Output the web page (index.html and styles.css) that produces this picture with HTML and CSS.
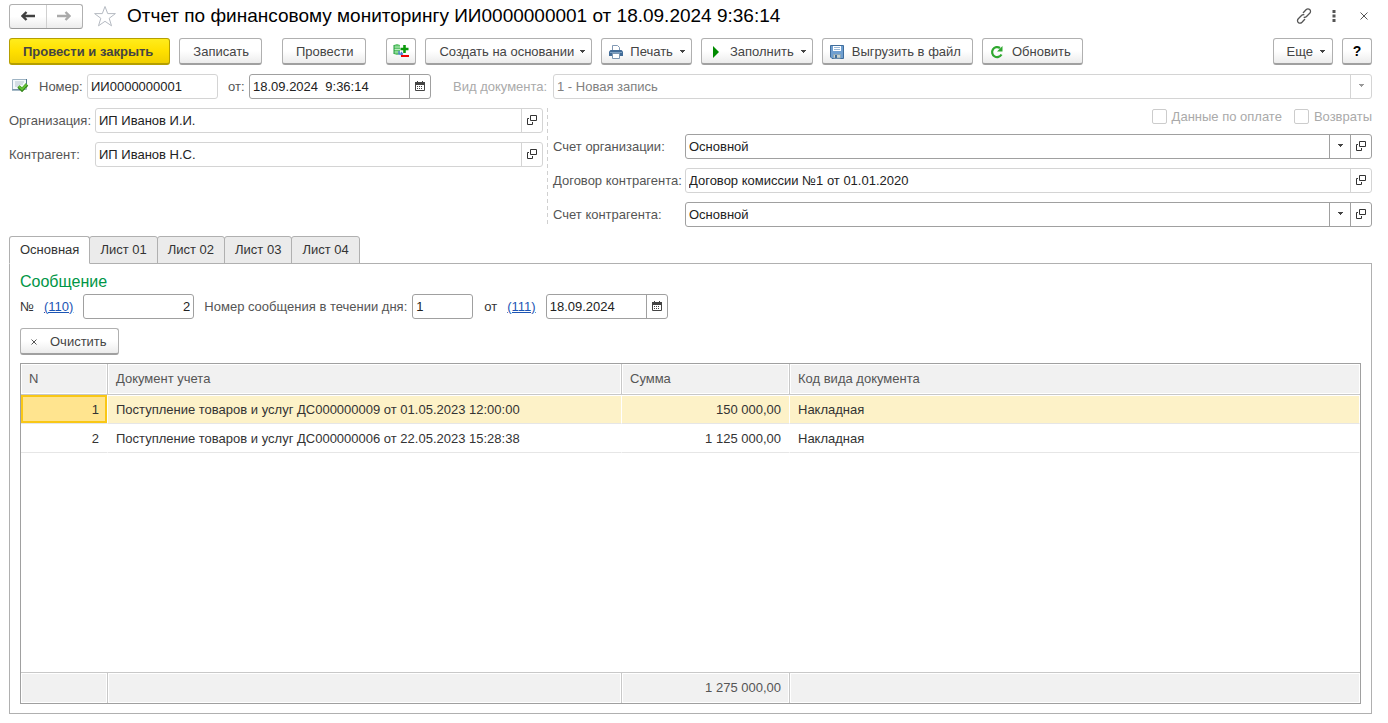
FILE: index.html
```html
<!DOCTYPE html>
<html lang="ru">
<head>
<meta charset="utf-8">
<title>Отчет по финансовому мониторингу</title>
<link rel="stylesheet" href="styles.css">
</head>
<body>
<svg class="sprite" aria-hidden="true">
  <symbol id="i-open" viewBox="0 0 10 10"><path d="M3.500.5h6v5h-6zM2 3.500H.5v6h5V7" fill="none" stroke="#333"/></symbol>
  <symbol id="i-cal" viewBox="0 0 10 10"><path d="M.5 1.500h9v8h-9z" fill="#fff" stroke="#444"/><path d="M0 1h10v3H0zM2 0h1v1H2zM7 0h1v1H7zM2 5h1v1H2zM4 5h1v1H4zM6 5h1v1H6zM2 7h1v1H2zM4 7h1v1H4zM6 7h1v1H6z" fill="#444"/></symbol>
  <symbol id="i-caret" viewBox="0 0 5 3"><path d="M0 0h5v1H4v1H3v1H2V2H1V1H0z" fill="currentColor"/></symbol>
  <symbol id="i-disk" viewBox="0 0 14 14"><path d="M.5.5h13v13H2L.5 12z" fill="#6f9fd0" stroke="#3f6d9c"/><path d="M3 1h8v5H3z" fill="#fff"/><path d="M4 2h6v1H4zM4 4h6v1H4z" fill="#9ab8d6"/><path d="M3.500 9.500h7V13h-7z" fill="#c9d3cf" stroke="#8fa8b8"/><path d="M5 10h2v3H5z" fill="#3f6d9c"/></symbol>
</svg>
<main class="form">
  <header class="titlebar">
    <div class="nav">
      <button type="button" aria-label="Назад"><svg width="14" height="10" viewBox="0 0 14 10"><path d="M14 5H2M5.500 1L1.500 5l4 4" fill="none" stroke="#404040" stroke-width="2.400"/></svg></button>
      <button type="button" aria-label="Вперед"><svg width="14" height="10" viewBox="0 0 14 10"><path d="M0 5h12M8.500 1l4 4-4 4" fill="none" stroke="#aaa" stroke-width="2.400"/></svg></button>
    </div>
    <button type="button" class="plain star" aria-label="В избранное"><svg width="24" height="22" viewBox="0 0 24 22"><path d="M12 1.500l2.700 7.100h7.700l-6.200 4.700 2.300 7.500L12 16.300l-6.500 4.500 2.300-7.500-6.200-4.700h7.700z" fill="#fff" stroke="#b5bac2"/></svg></button>
    <h1>Отчет по финансовому мониторингу ИИ0000000001 от 18.09.2024 9:36:14</h1>
    <div class="window-tools">
      <button type="button" class="plain" aria-label="Ссылка"><svg width="16" height="16" viewBox="0 0 16 16"><g fill="none" stroke="#555" stroke-width="1.300"><path d="M7 5l3-3.200c1.200-1.200 2.600-1.200 3.700-.2s1 2.600 0 3.700L10.500 8.500c-.8.900-1.900 1.100-2.800.7"/><path d="M9 11l-3 3.200c-1.200 1.200-2.600 1.200-3.700.2s-1-2.600 0-3.700L5.500 7.500c.8-.9 1.900-1.100 2.800-.7"/></g></svg></button>
      <button type="button" class="plain" aria-label="Меню"><svg width="4" height="12" viewBox="0 0 4 12"><path d="M.5 0h3v3h-3zM.5 4.500h3v3h-3zM.5 9h3v3h-3z" fill="#555"/></svg></button>
      <button type="button" class="plain close" aria-label="Закрыть"><svg width="8" height="8" viewBox="0 0 8 8"><path d="M.5.5l7 7M7.500.5l-7 7" stroke="#555"/></svg></button>
    </div>
  </header>

  <div class="toolbar">
    <button type="button" class="btn primary">Провести и закрыть</button>
    <button type="button" class="btn">Записать</button>
    <button type="button" class="btn group">Провести</button>
    <button type="button" class="btn square group" aria-label="Показать проводки"><svg width="16" height="16" viewBox="0 0 16 16"><path d="M1 2l3-1 3 1v9l-3 1-3-1z" fill="#5fc46b"/><path d="M1 4h6M1 6.500h6M1 9h6" stroke="#b9ecbf"/><path d="M1 2v9" stroke="#1f9a36"/><path d="M11.500 2v8M7.500 6h8" stroke="#0a9a0a" stroke-width="2.600"/><path d="M6 8v3h3M8 9l1.500 2L8 12.500" fill="none" stroke="#4c7fd0" stroke-width="1.300"/><path d="M8 12h8v2H8z" fill="#f00000"/></svg></button>
    <button type="button" class="btn menu">Создать на основании<svg class="caret"><use href="#i-caret"/></svg></button>
    <button type="button" class="btn icon menu"><svg width="14" height="14" viewBox="0 0 14 14"><path d="M3.500 6V.5h5l2 2V6" fill="#fff" stroke="#8098b4"/><path d="M1.500 5h11L14 6.500V11H0V6.500z" fill="#426c98"/><path d="M1 7h12v1H1z" fill="#7ea2c4"/><path d="M3.500 8.500h7v5h-7z" fill="#fff" stroke="#7b95b0"/></svg>Печать<svg class="caret"><use href="#i-caret"/></svg></button>
    <button type="button" class="btn icon menu"><svg width="14" height="14" viewBox="0 0 14 14"><path d="M4 1l6 6-6 6z" fill="#008a00"/></svg>Заполнить<svg class="caret"><use href="#i-caret"/></svg></button>
    <button type="button" class="btn icon"><svg width="14" height="14"><use href="#i-disk"/></svg>Выгрузить в файл</button>
    <button type="button" class="btn icon"><svg width="14" height="14" viewBox="0 0 14 14"><path d="M11.500 9.500A5 5 0 1 1 10 3" fill="none" stroke="#2fa82f" stroke-width="2.200"/><path d="M12.500 1v5.500H7z" fill="#2fa82f"/></svg>Обновить</button>
    <span class="spacer"></span>
    <button type="button" class="btn menu more">Еще<svg class="caret"><use href="#i-caret"/></svg></button>
    <button type="button" class="btn square help">?</button>
  </div>

  <div class="row document">
    <svg class="posted" width="18" height="14" viewBox="0 0 18 14"><path d="M1.500 1.500h14v10h-14z" fill="#f5f9fc" stroke="#9fb4c4"/><path d="M1 12h8M15.500 1v5" stroke="#4f7790"/><path d="M4 4h9M4 6h8M4 8h4" stroke="#b3c3ce"/><path d="M7.500 8.500l3.500 3.300 5-5.300" fill="none" stroke="#2a7d12" stroke-width="3.400"/><path d="M7.800 8.300l3.200 3 4.700-5" fill="none" stroke="#62c038" stroke-width="2"/></svg>
    <label class="number-label" for="number">Номер:</label>
    <div class="field light number"><input id="number" value="ИИ0000000001" readonly></div>
    <label class="from-label" for="date">от:</label>
    <div class="field date"><input id="date" value="18.09.2024  9:36:14"><button type="button" aria-label="Календарь"><svg width="10" height="10"><use href="#i-cal"/></svg></button></div>
    <label class="kind-label" for="kind">Вид документа:</label>
    <div class="field light grow disabled"><input id="kind" value="1 - Новая запись" disabled><button type="button" disabled aria-label="Выбрать"><svg class="mark"><use href="#i-caret"/></svg></button></div>
  </div>

  <div class="columns">
    <div class="left">
      <div class="row"><label for="org">Организация:</label><div class="field light grow"><input id="org" value="ИП Иванов И.И."><button type="button" aria-label="Открыть"><svg width="10" height="10"><use href="#i-open"/></svg></button></div></div>
      <div class="row"><label for="partner">Контрагент:</label><div class="field light grow"><input id="partner" value="ИП Иванов Н.С."><button type="button" aria-label="Открыть"><svg width="10" height="10"><use href="#i-open"/></svg></button></div></div>
    </div>
    <div class="divider"></div>
    <div class="right">
      <div class="checks">
        <label><input type="checkbox" disabled>Данные по оплате</label>
        <label><input type="checkbox" disabled>Возвраты</label>
      </div>
      <div class="row"><label for="acc1">Счет организации:</label><div class="field grow"><input id="acc1" value="Основной"><button type="button" aria-label="Выбрать"><svg class="mark"><use href="#i-caret"/></svg></button><button type="button" aria-label="Открыть"><svg width="10" height="10"><use href="#i-open"/></svg></button></div></div>
      <div class="row"><label for="contract">Договор контрагента:</label><div class="field light grow"><input id="contract" value="Договор комиссии №1 от 01.01.2020"><button type="button" aria-label="Открыть"><svg width="10" height="10"><use href="#i-open"/></svg></button></div></div>
      <div class="row"><label for="acc2">Счет контрагента:</label><div class="field grow"><input id="acc2" value="Основной"><button type="button" aria-label="Выбрать"><svg class="mark"><use href="#i-caret"/></svg></button><button type="button" aria-label="Открыть"><svg width="10" height="10"><use href="#i-open"/></svg></button></div></div>
    </div>
  </div>

  <div class="tabs" role="tablist">
    <button type="button" role="tab" class="tab active" aria-selected="true">Основная</button>
    <button type="button" role="tab" class="tab">Лист 01</button>
    <button type="button" role="tab" class="tab">Лист 02</button>
    <button type="button" role="tab" class="tab">Лист 03</button>
    <button type="button" role="tab" class="tab">Лист 04</button>
  </div>

  <section class="pane">
    <h2>Сообщение</h2>
    <div class="row message">
      <label class="dark" for="msg">№</label>
      <a href="#msg">(110)</a>
      <div class="field msg"><input id="msg" value="2"></div>
      <label class="day-label" for="day">Номер сообщения в течении дня:</label>
      <div class="field day"><input id="day" value="1"></div>
      <label class="dark" for="msgdate">от</label>
      <a href="#msgdate">(111)</a>
      <div class="field msgdate"><input id="msgdate" value="18.09.2024"><button type="button" aria-label="Календарь"><svg width="10" height="10"><use href="#i-cal"/></svg></button></div>
    </div>
    <button type="button" class="btn icon clear"><svg width="6" height="6" viewBox="0 0 6 6"><path d="M.5.5l5 5M5.500.5l-5 5" stroke="#555"/></svg>Очистить</button>
    <div class="grid">
      <table>
        <colgroup><col class="c-n"><col class="c-doc"><col class="c-sum"><col></colgroup>
        <thead><tr><th>N</th><th>Документ учета</th><th>Сумма</th><th>Код вида документа</th></tr></thead>
        <tbody>
          <tr class="selected"><td class="num current">1</td><td>Поступление товаров и услуг ДС000000009 от 01.05.2023 12:00:00</td><td class="num">150 000,00</td><td>Накладная</td></tr>
          <tr><td class="num">2</td><td>Поступление товаров и услуг ДС000000006 от 22.05.2023 15:28:38</td><td class="num">1 125 000,00</td><td>Накладная</td></tr>
          <tr class="rest"><td colspan="4"></td></tr>
        </tbody>
        <tfoot><tr><td></td><td></td><td class="num">1 275 000,00</td><td></td></tr></tfoot>
      </table>
    </div>
  </section>
</main>
</body>
</html>
```
FILE: styles.css
```css
* { box-sizing: border-box; }
body { margin: 0; background: #fff; color: #333; font: 13px/16px "Liberation Sans", Arial, sans-serif; }
button, input { font: inherit; color: inherit; }
svg { flex: none; }
.sprite { position: absolute; width: 0; height: 0; }

.form { display: flex; flex-direction: column; min-height: 100vh; padding: 4px 16px 9px 9px; }

.titlebar { display: flex; align-items: center; height: 24px; }
.nav { display: flex; width: 74px; height: 25px; border: 1px solid #b0b0b0; border-bottom-color: #999; border-radius: 3px; background: linear-gradient(#fff 50%, #ececec); }
.nav button { display: grid; place-items: center; flex: 1; padding: 0; border: 0; background: none; }
.nav button + button { border-left: 1px solid #d0d0d0; }
.plain { display: grid; place-items: center; padding: 0; border: 0; background: none; }
.star { margin: 0 10px; }
h1 { flex: 1; margin: 0; color: #000; font-size: 19px; font-weight: 400; line-height: 24px; white-space: nowrap; }
.window-tools { display: flex; align-items: center; gap: 20px; padding-right: 4px; }
.close { margin-left: 4px; }

.toolbar { display: flex; gap: 9px; margin-top: 10px; }
.btn { display: flex; align-items: center; justify-content: center; height: 27px; padding: 1px 12px 0 13px; border: 1px solid #b0b0b0; border-bottom: 2px solid #a0a0a0; border-radius: 3px; background: linear-gradient(#fff 50%, #ececec); color: #444; white-space: nowrap; }
.primary { padding: 1px 16px 0 13px; border-color: #b59f00; background: linear-gradient(#ffec1c, #ffe000 50%, #f0cf00); font-weight: 700; }
.group { margin-left: 11px; }
.square { width: 30px; padding: 0; }
.icon { padding-right: 11px; padding-left: 7px; gap: 8px; }
.menu { padding-right: 6px; }
.menu.icon { gap: 7px; }
.caret { width: 5px; height: 3px; margin-left: 6px; }
.icon .caret { margin-left: 0; }
.more { padding-right: 7px; }
.more .caret { margin-left: 7px; }
.spacer { flex: 1; }
.help { color: #000; font-size: 14px; font-weight: 700; }

.row { display: flex; align-items: center; }
.row label { color: #555; white-space: nowrap; }
.row .dark { color: #333; }
.field { display: flex; height: 25px; border: 1px solid #a0a0a0; border-radius: 3px; background: #fff; color: #222; }
.field input { flex: 1; min-width: 0; width: 0; padding: 0 3px; border: 0; outline: 0; background: none; white-space: pre; }
.field button { display: grid; place-items: center; width: 21px; padding: 0 0 2px; border: 0; border-left: 1px solid #a0a0a0; background: none; color: #444; }
.field.light, .light button { border-color: #d4d4d4; }
.grow { flex: 1; }
.mark { width: 5px; height: 3px; }
.field.disabled { color: #808080; }
.disabled button { color: #999; }

.document { margin-top: 9px; }
.posted { margin: 0 10px 4px 2px; }
.row .number-label { width: 48px; }
.number { width: 131px; }
.row .from-label { width: 21px; margin-left: 10px; }
.date { width: 182px; }
.row .kind-label { width: 100px; margin-left: 22px; color: #aaa; }

.columns { display: grid; grid-template-columns: minmax(0, 534fr) 10px minmax(0, 819fr); margin-top: 9px; }
.left, .right { display: flex; flex-direction: column; gap: 9px; }
.left label { width: 86px; }
.right .row label { width: 132px; }
.divider { width: 1px; margin-left: 4px; background: repeating-linear-gradient(#d0d0d0 0 4px, transparent 4px 7px); }
.checks { display: flex; justify-content: flex-end; gap: 12px; height: 17px; color: #aaa; }
.checks label { display: flex; align-items: center; gap: 5px; }
.checks input { appearance: none; width: 15px; height: 15px; margin: 0; border: 1px solid #ccc; border-radius: 2px; }

.tabs { display: flex; margin-top: 9px; }
.tab { height: 28px; margin: 0 0 -1px -1px; padding: 0 10px; border: 1px solid #b0b0b0; border-radius: 3px 3px 0 0; background: #ebebeb; color: #333; }
.tab.active { margin-left: 0; border-bottom-color: #fff; background: #fff; z-index: 1; }

.pane { display: flex; flex: 1; flex-direction: column; padding: 9px 10px; border: 1px solid #b0b0b0; }
h2 { margin: 0; color: #009646; font-size: 16px; font-weight: 400; line-height: 18px; }
.message { margin-top: 3px; }
.message a { margin: 0 10px; color: #1c55b4; }
.msg { width: 111px; }
.msg input { text-align: right; }
.row .day-label { width: 208px; margin-left: 10px; }
.day { width: 61px; margin-right: 11px; }
.msgdate { width: 122px; }
.clear { align-self: flex-start; margin: 9px 0 8px; padding-left: 10px; gap: 13px; }

.grid { display: grid; flex: 1; border: 1px solid #a0a0a0; }
table { width: 100%; height: 100%; table-layout: fixed; border-collapse: separate; border-spacing: 0; }
.c-n { width: 87px; }
.c-doc { width: 514px; }
.c-sum { width: 168px; }
th, td { padding: 0 8px; border: 0 solid #c8c8c8; text-align: left; font-weight: 400; white-space: nowrap; }
th { height: 31px; border-right-width: 1px; border-bottom-width: 1px; background: #f1f1f1; color: #555; box-shadow: inset 0 0 0 1px #fff; }
tfoot td { height: 31px; border-right-width: 1px; border-top-width: 1px; background: #f1f1f1; color: #555; box-shadow: inset 0 0 0 1px #fff; }
th:last-child, tfoot td:last-child { border-right-width: 0; }
tbody td { height: 29px; padding-top: 2px; border-right: 1px solid #fff; border-bottom: 1px solid #e6e6e6; color: #333; }
.selected td { background: #fdf2c8; box-shadow: inset 0 1px #fff; }
.selected .current { background: #ffe48f; box-shadow: inset 0 0 0 2px #f9c716; }
.rest td { height: auto; border: 0; }
.num, th.num { text-align: right; }
```
